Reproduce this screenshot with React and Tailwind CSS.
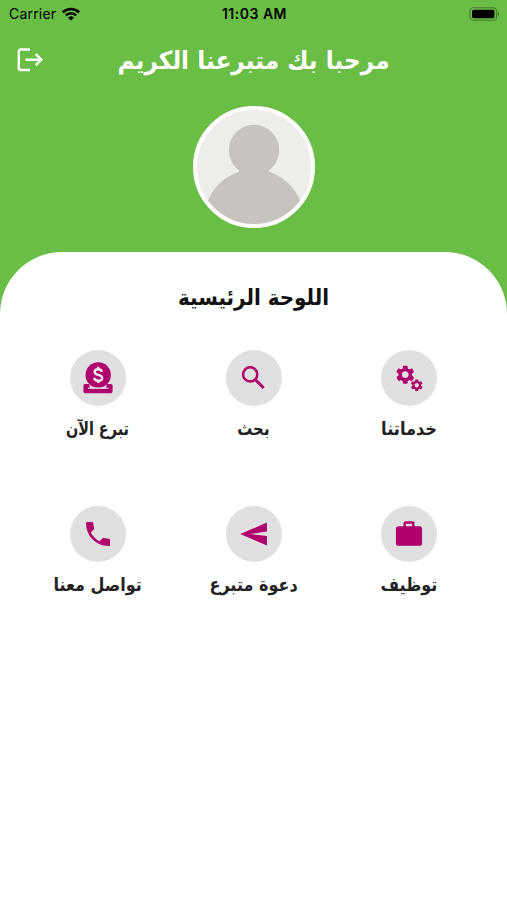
import React from 'react';
import { MdPhone, MdSettings } from 'react-icons/md';

const DonateIcon = () => (
  <svg className="w-8 h-8" viewBox="0 0 32 32" fill="none">
    <path d="M3 22h4l1.300 4.500h15.400l1.300-4.500h4a1.600 1.600 0 0 1 1.600 1.600V29.500a1.800 1.800 0 0 1-1.800 1.800H3.200a1.800 1.800 0 0 1-1.800-1.800v-5.900A1.600 1.600 0 0 1 3 22z" fill="#b0006d" />
    <circle cx="16.200" cy="13" r="12.700" fill="#b0006d" />
    <path d="M6 26.200h20.400" stroke="#e0e0e0" strokeWidth="1.200" />
    <path d="M19.900 9.800c-.3-1.800-1.600-2.600-3.700-2.600s-3.600 1-3.600 2.700c0 4 7.600 1.900 7.600 6 0 1.800-1.600 2.900-3.900 2.900s-3.900-1-4.100-2.900M16.200 4.800v2.400M16.200 18.500v2.500" stroke="#ececec" strokeWidth="2.400" />
  </svg>
);

const SearchIcon = () => (
  <svg className="w-8 h-8" viewBox="0 0 32 32" fill="none" stroke="currentColor">
    <circle cx="12.200" cy="12.400" r="7.100" strokeWidth="2.500" />
    <path d="m17.100 17.400 8.600 8.600" strokeWidth="2.900" />
  </svg>
);

const ServicesIcon = () => (
  <svg className="w-8 h-8" viewBox="0 0 32 32">
    <MdSettings x="1" y="1.400" size={22.5} />
    <MdSettings x="16.500" y="16" size={14.5} />
  </svg>
);

const CallIcon = () => <MdPhone className="w-8 h-8" />;

const InviteIcon = () => (
  <svg className="w-8 h-8" viewBox="0 0 32 32" fill="currentColor">
    <path d="M2.200 16.100 28.900 4.600v8.900L12 16.100l16.900 1.800v9.500z" />
  </svg>
);

const JobsIcon = () => (
  <svg className="w-8 h-8" viewBox="0 0 32 32" fill="currentColor">
    <path fillRule="evenodd" d="M12.500 3.300h7a2 2 0 0 1 2 2v2.900h5a2.600 2.600 0 0 1 2.600 2.600v14.400a2.600 2.600 0 0 1-2.600 2.600h-21a2.600 2.600 0 0 1-2.600-2.600V10.800a2.600 2.600 0 0 1 2.600-2.600h5V5.300a2 2 0 0 1 2-2zm.4 2.400v2.500h6.200V5.700z" />
  </svg>
);

const items = [
  { label: 'خدماتنا', Icon: ServicesIcon, text: 'scale-x-[0.9]' },
  { label: 'بحث', Icon: SearchIcon, text: 'scale-x-[0.83]' },
  { label: 'تبرع الآن', Icon: DonateIcon, text: 'scale-x-[0.8]' },
  { label: 'توظيف', Icon: JobsIcon, text: 'scale-x-[0.89]' },
  { label: 'دعوة متبرع', Icon: InviteIcon, text: 'scale-x-[0.89]' },
  { label: 'تواصل معنا', Icon: CallIcon, text: 'scale-x-[0.89]' },
];

const StatusBar = () => (
  <div dir="ltr" className="grid grid-cols-3 items-center h-[27px] pl-[9px] pr-[7px] font-['Inter',sans-serif] text-black">
    <div className="flex items-center gap-[6px]">
      <span className="text-[14px] font-normal leading-none tracking-[0.2px]">Carrier</span>
      <svg className="w-[18px] h-[14px]" viewBox="0 0 18 14" fill="none" stroke="currentColor" strokeWidth="2.6">
        <path d="M.9 5.300a11.500 11.500 0 0 1 16.200 0M3.800 8.400a7.400 7.400 0 0 1 10.400 0" />
        <path d="M9 13.600 6.100 10.700a4.100 4.100 0 0 1 5.800 0z" fill="currentColor" stroke="none" />
      </svg>
    </div>
    <span className="text-center text-[14px] font-semibold leading-none tracking-[0.5px] whitespace-nowrap">11:03 AM</span>
    <svg className="w-[31px] h-[14px] justify-self-end" viewBox="0 0 31 14">
      <rect x=".9" y=".8" width="26.6" height="12.4" rx="3.5" fill="none" stroke="#457b2d" strokeWidth="1.1" />
      <rect x="3" y="2.7" width="22.4" height="8.6" rx="1.8" fill="#000" />
      <path d="M28.600 4.700c2 .8 2 3.800 0 4.600z" fill="#457b2d" />
    </svg>
  </div>
);

const Avatar = () => (
  <div className="w-[122px] h-[122px] rounded-full border-4 border-white bg-[#efede9] overflow-hidden">
    <svg className="w-full h-full" viewBox="0 0 114 114" fill="#c7c4bf">
      <circle cx="57" cy="40" r="25.2" />
      <path d="M42 54h30v14H42z" />
      <circle cx="57" cy="109" r="49.500" />
    </svg>
  </div>
);

const App = () => {
  return (
    <div dir="rtl" className="w-[507px] h-[900px] overflow-hidden bg-white font-['DejaVu_Sans',sans-serif] font-bold">
      <header className="h-[320px] bg-[#6abd45]">
        <StatusBar />
        <div dir="ltr" className="grid grid-cols-[60px_1fr_60px] items-center h-[66px]">
          <button className="pl-[15px]">
            <svg className="w-7 h-7" viewBox="0 0 28 28" fill="none" stroke="#fff" strokeWidth="2.4">
              <path d="M15 3.500H5.800a2 2 0 0 0-2 2v16.500a2 2 0 0 0 2 2H15M10.500 13.700h16M20.700 8.200l5.700 5.500-5.700 5.500" />
            </svg>
          </button>
          <h1 dir="rtl" className="text-center text-[25px] leading-none text-white whitespace-nowrap scale-x-[0.93]">مرحبا بك متبرعنا الكريم</h1>
        </div>
        <div className="flex justify-center pt-[13px]">
          <Avatar />
        </div>
      </header>

      <main className="-mt-[68px] h-[648px] rounded-t-[62px] bg-white pt-[31px]">
        <h2 className="text-center text-[22px] leading-[30px] text-[#111] scale-x-[0.905]">اللوحة الرئيسية</h2>
        <div className="grid grid-cols-3 gap-y-[60px] px-5 pt-[37px]">
          {items.map(({ label, Icon, text }) => (
            <button key={label} className="flex flex-col items-center h-24">
              <span className="flex items-center justify-center w-14 h-14 rounded-full bg-[#e0e0e0] text-[#b0006d]">
                <Icon />
              </span>
              <span className={`mt-[9px] text-[18px] leading-7 text-[#222] whitespace-nowrap ${text}`}>{label}</span>
            </button>
          ))}
        </div>
      </main>
    </div>
  );
};

export default App;
